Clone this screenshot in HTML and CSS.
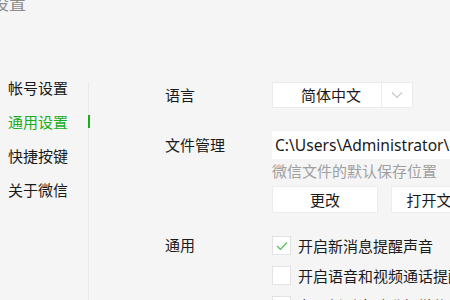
FILE: index.html
```html
<!DOCTYPE html>
<html lang="zh-CN">
<head>
    <meta charset="UTF-8">
    <meta name="viewport" content="width=device-width, initial-scale=1.0">
    <title>设置</title>
    <link rel="stylesheet" href="styles.css">
</head>
<body>
    <div class="title">设置</div>
    <div class="main">
        <ul class="nav">
            <li>帐号设置</li>
            <li class="active">通用设置</li>
            <li>快捷按键</li>
            <li>关于微信</li>
        </ul>
        <div class="content">
            <div class="row">
                <div class="label">语言</div>
                <div class="value">
                    <div class="select">
                        <span class="select-text">简体中文</span>
                        <span class="select-arrow">
                            <svg width="12" height="8" viewBox="0 0 12 8"><path d="M1 1.5l5 5 5-5" fill="none" stroke="#c8c8c8" stroke-width="1.2"/></svg>
                        </span>
                    </div>
                </div>
            </div>

            <div class="row row-file">
                <div class="label">文件管理</div>
                <div class="value">
                    <div class="path">C:\Users\Administrator\Documents\WeChat Files</div>
                    <div class="hint">微信文件的默认保存位置</div>
                    <div class="buttons">
                        <button class="btn">更改</button>
                        <button class="btn">打开文件夹</button>
                    </div>
                </div>
            </div>

            <div class="row row-general">
                <div class="label">通用</div>
                <div class="value checks">
                    <label class="check">
                        <span class="box">
                            <svg width="12" height="10" viewBox="0 0 12 10"><path d="M1 5l3.5 3.5L11 1.5" fill="none" stroke="#4cbf4c" stroke-width="1.2"/></svg>
                        </span>
                        开启新消息提醒声音
                    </label>
                    <label class="check"><span class="box"></span>开启语音和视频通话提醒声音</label>
                    <label class="check"><span class="box"></span>有更新时自动升级微信</label>
                </div>
            </div>
        </div>
    </div>
</body>
</html>
```

FILE: styles.css
```css
body {
    margin: 0;
    padding: 0;
    background-color: #f5f5f5;
    font-family: "Noto Sans", "Noto Sans CJK SC", sans-serif;
    font-size: 15px;
    color: #1a1a1a;
    overflow: hidden;
}
.title {
    margin: -6px 0 0 -8px;
    font-size: 17px;
    line-height: 20px;
    color: #8c8c8c;
}
.main {
    display: flex;
    align-items: flex-start;
    margin-top: 57px;
}
.nav {
    list-style: none;
    margin: 0;
    padding: 0 0 0 8px;
    width: 80px;
    flex-shrink: 0;
}
.nav li {
    position: relative;
    line-height: 34px;
    white-space: nowrap;
}
.nav li.active {
    color: #1aad19;
}
.nav li.active::after {
    content: "";
    position: absolute;
    right: -2px;
    top: 10px;
    width: 2px;
    height: 13px;
    background: #1aad19;
}
.content {
    flex: 1;
    min-width: 0;
    margin-top: 11px;
    padding-left: 76px;
    border-left: 1px solid #e9e9e9;
    height: 300px;
    white-space: nowrap;
}
.row {
    display: flex;
}
.label {
    width: 107px;
    flex-shrink: 0;
    line-height: 26px;
}
.select {
    display: flex;
    width: 139px;
    height: 24px;
    background: #fff;
    border: 1px solid #ebebeb;
}
.select-text {
    width: 109px;
    padding-left: 8px;
    box-sizing: border-box;
    line-height: 24px;
    text-align: center;
    border-right: 1px solid #ebebeb;
}
.select-arrow {
    flex: 1;
    display: flex;
    align-items: center;
    justify-content: center;
}
.row-file {
    margin-top: 23px;
}
.row-file .label {
    line-height: 28px;
}
.path {
    width: 200px;
    height: 28px;
    line-height: 28px;
    padding-left: 3px;
    font-size: 15.6px;
    background: #fff;
    overflow: hidden;
}
.hint {
    line-height: 20px;
    margin-top: 2px;
    color: #a0a0a0;
}
.buttons {
    display: flex;
    gap: 13px;
    margin-top: 5px;
}
.btn {
    width: 106px;
    height: 27px;
    padding: 0;
    font-family: inherit;
    font-size: 15px;
    color: #1a1a1a;
    background: #fff;
    border: 1px solid #ededed;
    flex-shrink: 0;
}
.row-general {
    margin-top: 23px;
}
.row-general .label {
    line-height: 18px;
}
.checks {
    display: flex;
    flex-direction: column;
    gap: 11px;
}
.check {
    display: flex;
    align-items: center;
    gap: 7px;
    line-height: 18px;
}
.box {
    display: flex;
    align-items: center;
    justify-content: center;
    width: 17px;
    height: 17px;
    background: #fff;
    border: 1px solid #e3e3e3;
}
```
